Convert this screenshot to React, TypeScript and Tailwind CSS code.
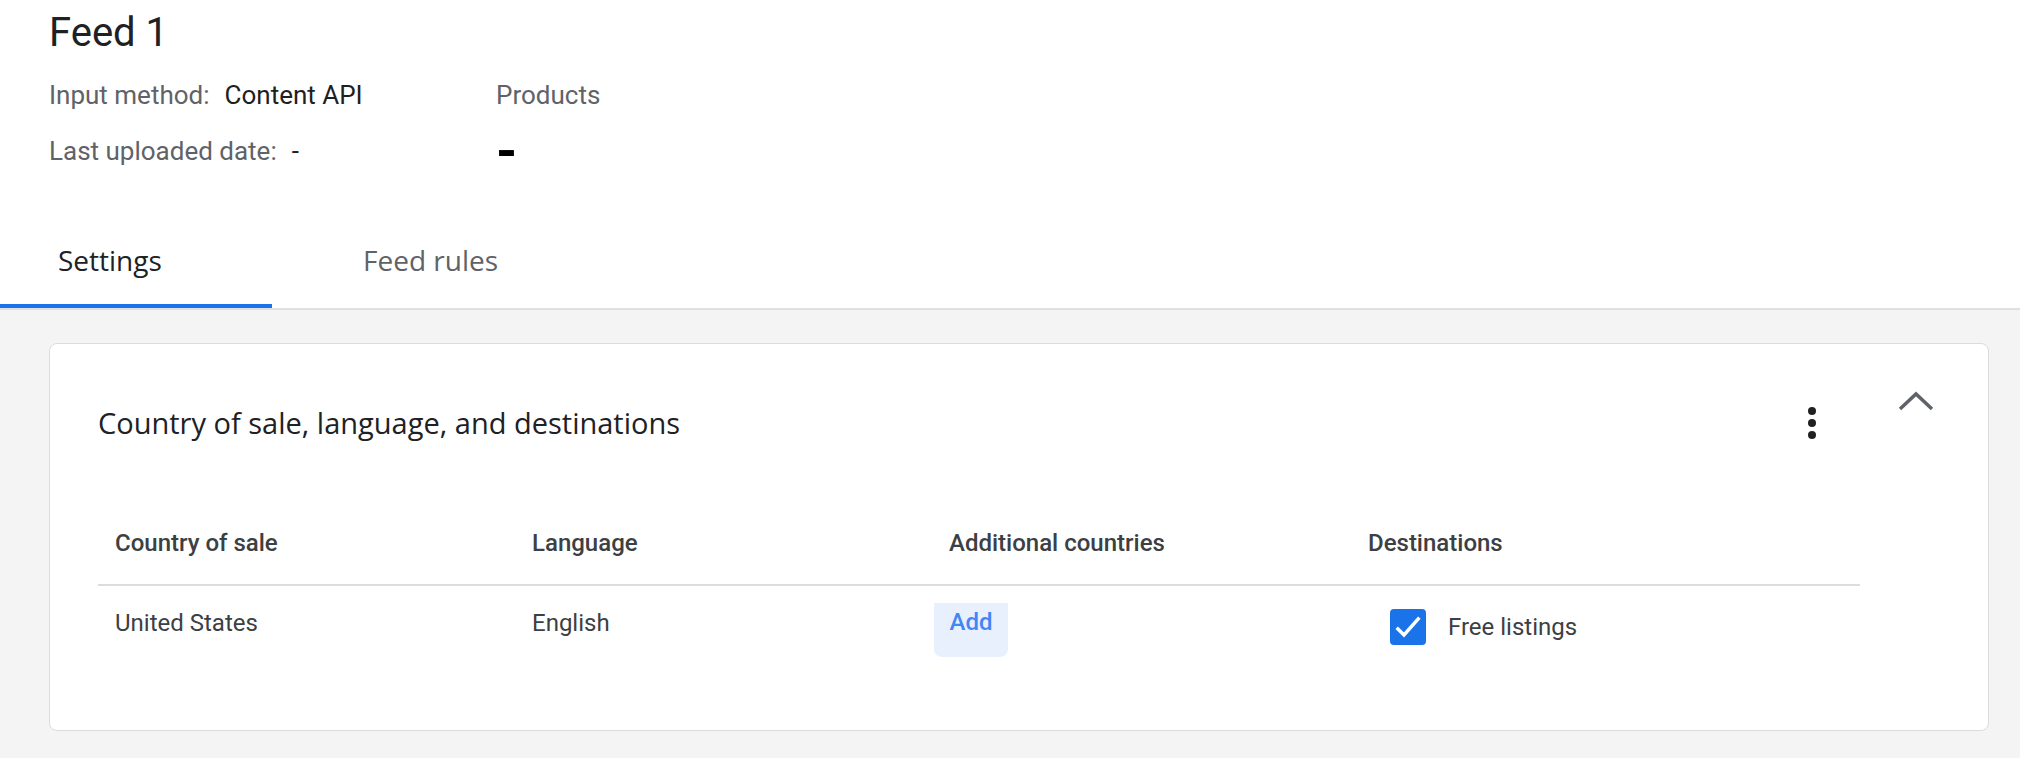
function Kebab() {
  return (
    <svg width="48" height="48" viewBox="0 0 48 48" aria-hidden>
      <circle cx="24" cy="12" r="4" fill="#202124" />
      <circle cx="24" cy="24" r="4" fill="#202124" />
      <circle cx="24" cy="36" r="4" fill="#202124" />
    </svg>
  );
}

function ChevronUp() {
  return (
    <svg width="36" height="22" viewBox="0 0 36 22" aria-hidden>
      <polyline
        points="2,18 18,3 34,18"
        fill="none"
        stroke="#5f6368"
        strokeWidth="3.5"
        strokeLinejoin="miter"
      />
    </svg>
  );
}

function Checkbox() {
  return (
    <div className="w-[36px] h-[36px] rounded-[4px] bg-[#1a73e8] flex items-center justify-center">
      <svg width="32" height="32" viewBox="0 0 24 24" aria-hidden>
        <path d="M3.5 12.5l5.5 5.5L20.5 5" fill="none" stroke="#fff" strokeWidth="2.6" />
      </svg>
    </div>
  );
}

export default function App() {
  const heading = "font-['Open_Sans',sans-serif]";

  return (
    <div className="w-[2020px] h-[758px] overflow-hidden bg-[#f4f4f4] font-['Roboto',sans-serif]">
      <div className="bg-white">
        <div className="pl-[49px] pt-[7px]">
          <h1 className="text-[40px] leading-[52px] text-[#202124]">Feed 1</h1>
          <div className="flex mt-[20px] text-[26px] leading-[32px]">
            <div className="w-[447px] flex flex-col gap-[24px]">
              <div className="flex">
                <span className="text-[#5f6368]">Input method:</span>
                <span className="ml-[15px] text-[#1f1f1f]">Content API</span>
              </div>
              <div className="flex">
                <span className="text-[#5f6368]">Last uploaded date:</span>
                <span className="ml-[15px] text-[#1f1f1f]">-</span>
              </div>
            </div>
            <div className="flex flex-col gap-[24px]">
              <span className="text-[#5f6368]">Products</span>
              <span className="text-[54px] font-bold leading-[32px] text-[#000]">-</span>
            </div>
          </div>
        </div>

        <div className={`flex mt-[45px] border-b-2 border-[#e0e0e0] ${heading}`}>
          <div className="w-[272px] h-[96px] flex flex-col">
            <div className="flex-1 flex items-center pl-[58px] pt-[4px] text-[28px] font-medium text-[#202124]">
              Settings
            </div>
            <div className="h-[4px] bg-[#1a73e8]" />
          </div>
          <div className="h-[96px] flex items-center pl-[91px] text-[28px] font-medium text-[#5f6368]">
            Feed rules
          </div>
        </div>
      </div>

      <div className="pt-[33px] pl-[49px] pr-[31px]">
        <div className="h-[388px] flex bg-white border border-[#dadce0] rounded-[8px]">
          <div className="flex-1 pl-[48px] flex flex-col">
            <div className="h-[158px] flex items-center">
              <h2 className={`${heading} text-[29px] font-medium text-[#202124]`}>
                Country of sale, language, and destinations
              </h2>
              <button className="ml-auto mr-[24px] w-[48px] h-[48px] flex items-center justify-center">
                <Kebab />
              </button>
            </div>

            <div className="grid grid-cols-[417px_417px_417px_1fr] h-[84px] items-center border-b-2 border-[#dadce0] text-[24px] font-medium text-[#3c4043]">
              <div className="pl-[17px]">Country of sale</div>
              <div className="pl-[17px]">Language</div>
              <div className="pl-[17px]">Additional countries</div>
              <div className="pl-[19px]">Destinations</div>
            </div>

            <div className="grid grid-cols-[417px_417px_417px_1fr] items-start pt-[17px] text-[24px] leading-[28px] text-[#3c4043]">
              <div className="pl-[17px] pt-[6px]">United States</div>
              <div className="pl-[17px] pt-[6px]">English</div>
              <div className="pl-[2px]">
                <button className="h-[54px] w-[74px] pt-[5px] flex justify-center rounded-b-[8px] bg-[#e8f0fe] font-medium text-[#4285f4]">
                  <span className="leading-[28px]">Add</span>
                </button>
              </div>
              <div className="pl-[41px] pt-[6px] flex items-center">
                <Checkbox />
                <span className="ml-[22px] leading-[36px]">Free listings</span>
              </div>
            </div>
          </div>

          <div className="w-[128px] pt-[47px] pl-[38px]">
            <ChevronUp />
          </div>
        </div>
      </div>
    </div>
  );
}
